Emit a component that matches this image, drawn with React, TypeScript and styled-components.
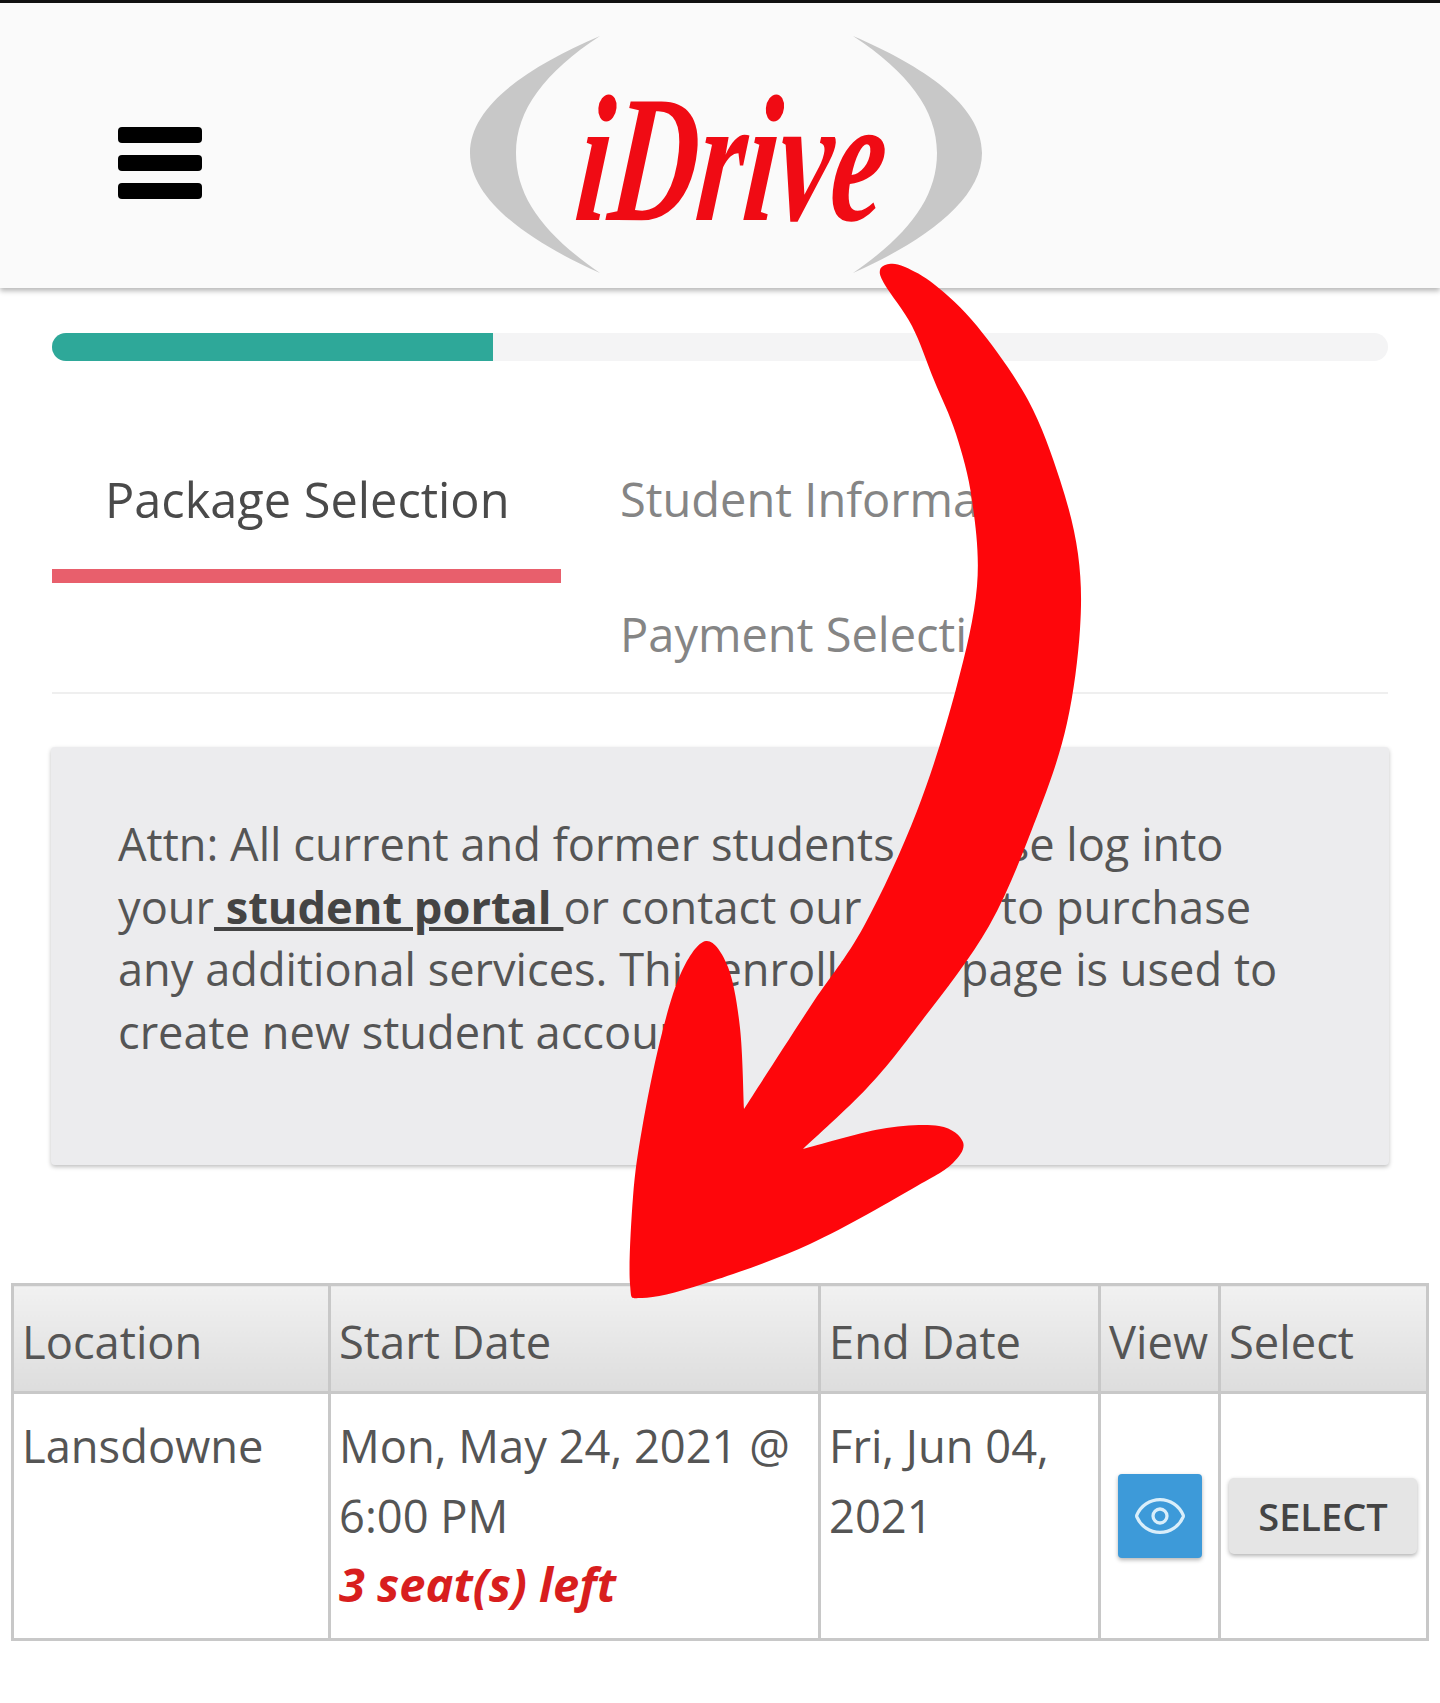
import React from "react";
import styled, { createGlobalStyle } from "styled-components";
import { Eye } from "lucide-react";

const Global = createGlobalStyle`
  html, body { margin: 0; padding: 0; background: #fff; }
  body { font-family: "Open Sans", "Liberation Sans", sans-serif; }
`;

const Page = styled.div`
  position: relative;
  width: 1440px;
  height: 1703px;
  overflow: hidden;
  background: #fff;
  border-top: 3px solid #111;
  box-sizing: border-box;
`;

const Header = styled.header`
  display: flex;
  align-items: flex-start;
  height: 285px;
  background: #fafafa;
  box-shadow: 0 3px 5px rgba(0, 0, 0, 0.28);
`;

const Burger = styled.div`
  display: flex;
  flex-direction: column;
  gap: 12px;
  width: 84px;
  margin: 124px 0 0 118px;
`;

const BurgerBar = styled.span`
  display: block;
  height: 16px;
  border-radius: 4px;
  background: #000;
`;

const LogoSvg = styled.svg`
  display: block;
  width: 520px;
  height: 245px;
  margin: 30px 0 0 266px;
`;

const Main = styled.main`
  padding: 45px 52px 0;
`;

const Progress = styled.div`
  height: 28px;
  border-radius: 14px;
  background: #f4f4f5;
  overflow: hidden;
`;

const ProgressFill = styled.div<{ $value: number }>`
  width: ${(p) => p.$value}%;
  height: 100%;
  background: #2ea899;
`;

const TabList = styled.nav`
  display: grid;
  grid-template-columns: 509px 1fr;
  column-gap: 6px;
  align-items: start;
  margin-top: 87px;
  border-bottom: 2px solid #efefef;
`;

const Tab = styled.div<{ $active?: boolean }>`
  grid-column: ${(p) => (p.$active ? 1 : 2)};
  padding: 20px 53px ${(p) => (p.$active ? "39px" : "27px")};
  border-bottom: ${(p) => (p.$active ? "14px solid #e85f6c" : "0")};
  font-size: ${(p) => (p.$active ? "48.7px" : "47px")};
  line-height: 62px;
  white-space: nowrap;
  color: ${(p) => (p.$active ? "#4a4a4a" : "#858585")};
`;

const Notice = styled.section`
  margin: 53px -1px 0;
  padding: 66px 97px 102px 67px;
  background: #ececee;
  border-radius: 4px;
  box-shadow: 0 2px 4px rgba(0, 0, 0, 0.25);
  font-size: 45.2px;
  line-height: 62.6px;
  color: #555;
`;

const PortalLink = styled.a`
  font-weight: 700;
  color: #444;
  text-decoration: underline;
`;

const Table = styled.table`
  width: 1415px;
  margin: 118px 0 0 -41px;
  border-collapse: collapse;
  table-layout: fixed;
  font-size: 45.3px;
  color: #555;
`;

const HeadCell = styled.th`
  height: 99px;
  padding: 6px 8px 0 8px;
  border: 3px solid #c8c8c8;
  background: linear-gradient(#f1f1f1, #dddddd);
  font-weight: 400;
  text-align: left;
  white-space: nowrap;
`;

const Cell = styled.td<{ $center?: boolean }>`
  padding: 17px 8px 17px 8px;
  border: 3px solid #c8c8c8;
  line-height: 70px;
  vertical-align: ${(p) => (p.$center ? "middle" : "top")};
`;

const Seats = styled.em`
  display: block;
  margin-top: -2px;
  margin-bottom: 2px;
  font-size: 47px;
  font-weight: 700;
  color: #d81e1e;
`;

const ViewButton = styled.button`
  display: flex;
  align-items: center;
  justify-content: center;
  width: 84px;
  height: 84px;
  margin: 0 0 0 9px;
  padding: 0;
  border: 0;
  border-radius: 4px;
  background: #3d9ad9;
  color: #d9eefa;
  box-shadow: 0 2px 4px rgba(0, 0, 0, 0.3);
`;

const SelectButton = styled.button`
  display: block;
  width: 188px;
  height: 76px;
  padding: 0;
  border: 0;
  border-radius: 5px;
  background: #e5e5e5;
  box-shadow: 0 2px 4px rgba(0, 0, 0, 0.3);
  font-family: inherit;
  font-size: 38px;
  font-weight: 600;
  color: #444;
`;

const ArrowSvg = styled.svg`
  position: absolute;
  left: 0;
  top: -3px;
  width: 1440px;
  height: 1703px;
  pointer-events: none;
`;

type Pt = [number, number];

// Catmull-Rom through hand-traced points; corners sit between the runs.
const smooth = (pts: Pt[]): string => {
  let d = "";
  for (let i = 0; i < pts.length - 1; i++) {
    const p0 = pts[Math.max(i - 1, 0)];
    const p1 = pts[i];
    const p2 = pts[i + 1];
    const p3 = pts[Math.min(i + 2, pts.length - 1)];
    const c1 = [p1[0] + (p2[0] - p0[0]) / 6, p1[1] + (p2[1] - p0[1]) / 6];
    const c2 = [p2[0] - (p3[0] - p1[0]) / 6, p2[1] - (p3[1] - p1[1]) / 6];
    d += `C${c1[0]} ${c1[1]} ${c2[0]} ${c2[1]} ${p2[0]} ${p2[1]} `;
  }
  return d;
};

const OUTER: Pt[] = [
  [744, 1109], [810, 1007], [864, 926], [917, 811], [956, 689], [977, 586], [972, 500],
  [956, 434], [934, 380], [912, 326], [885, 285], [880, 270], [889, 264],
  [905, 267], [935, 285], [977, 326], [1028, 400], [1060, 480], [1078, 554], [1080, 629], [1067, 723],
  [1039, 811], [989, 926], [917, 1027], [867, 1088], [803, 1149],
];
const HEAD: Pt[] = [
  [803, 1149], [881, 1129], [939, 1126], [963, 1142], [953, 1163], [917, 1186], [810, 1244],
  [703, 1284], [642, 1298], [630, 1284], [633, 1197], [642, 1129], [660, 1041], [681, 973],
  [706, 941], [728, 967], [740, 1028], [744, 1109],
];
const ARROW = `M744 1109 ${smooth(OUTER)}${smooth(HEAD)}Z`;

export default function App() {
  return (
    <Page>
      <Global />
      <Header>
        <Burger>
          <BurgerBar />
          <BurgerBar />
          <BurgerBar />
        </Burger>
        <LogoSvg viewBox="468 33 520 245">
          <path d="M600 36 C530 66 470 105 470 153 C470 200 530 242 600 273 C545 235 516 198 516 153 C516 110 545 72 600 36 Z" fill="#c8c8c8" />
          <path d="M853 36 C923 66 982 105 982 153 C982 200 923 242 853 273 C908 235 937 198 937 153 C937 110 908 72 853 36 Z" fill="#c8c8c8" />
          <text
            x="594"
            y="220"
            transform="skewX(-5.5)"
            fontFamily="'Liberation Serif', serif"
            fontWeight="700"
            fontStyle="italic"
            fontSize="181"
            fill="#f00b14"
            textLength="308"
            lengthAdjust="spacingAndGlyphs"
          >
            iDrive
          </text>
        </LogoSvg>
      </Header>
      <Main>
        <Progress>
          <ProgressFill $value={33} />
        </Progress>
        <TabList>
          <Tab $active>Package Selection</Tab>
          <Tab>Student Information</Tab>
          <Tab>Payment Selection</Tab>
        </TabList>
        <Notice>
          Attn: All current and former students, please log into your<PortalLink> student portal </PortalLink>or contact our office to purchase any additional services. This enrollment page is used to create new student accounts.
        </Notice>
        <Table>
          <colgroup>
            <col width="317" />
            <col width="490" />
            <col width="280" />
            <col width="120" />
            <col width="208" />
          </colgroup>
          <thead>
            <tr>
              <HeadCell>Location</HeadCell>
              <HeadCell>Start Date</HeadCell>
              <HeadCell>End Date</HeadCell>
              <HeadCell>View</HeadCell>
              <HeadCell>Select</HeadCell>
            </tr>
          </thead>
          <tbody>
            <tr>
              <Cell>Lansdowne</Cell>
              <Cell>
                Mon, May 24, 2021 @ 6:00 PM
                <Seats>3 seat(s) left</Seats>
              </Cell>
              <Cell>Fri, Jun 04, 2021</Cell>
              <Cell $center>
                <ViewButton aria-label="View">
                  <Eye size={56} strokeWidth={1.4} />
                </ViewButton>
              </Cell>
              <Cell $center>
                <SelectButton>SELECT</SelectButton>
              </Cell>
            </tr>
          </tbody>
        </Table>
      </Main>
      <ArrowSvg viewBox="0 0 1440 1703">
        <path d={ARROW} fill="#fe060b" />
      </ArrowSvg>
    </Page>
  );
}
